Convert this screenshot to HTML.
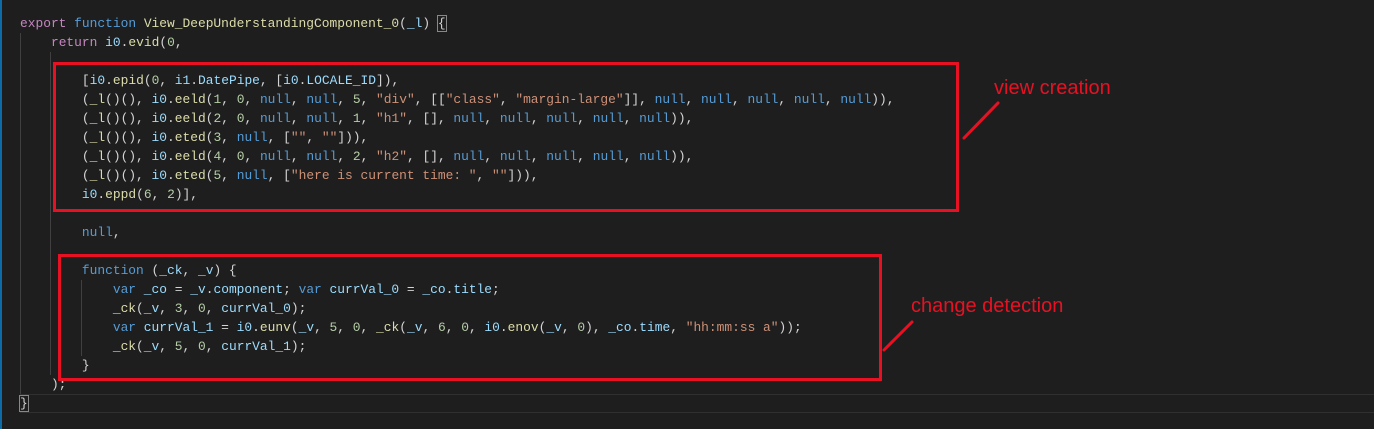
<!DOCTYPE html>
<html><head><meta charset="utf-8"><style>
html,body{margin:0;padding:0;background:#1e1e1e;width:1374px;height:429px;overflow:hidden;position:relative}
.code{position:absolute;left:20px;top:14px;font-family:"Liberation Mono",monospace;font-size:12.9px;line-height:19px;color:#d4d4d4;white-space:pre}
.k{color:#c586c0}.b{color:#569cd6}.f{color:#dcdcaa}.v{color:#9cdcfe}.n{color:#b5cea8}.s{color:#ce9178}
.box{position:absolute;border:3px solid #e81123;box-sizing:border-box}
.lbl{position:absolute;color:#e81123;font-family:"Liberation Sans",sans-serif;font-size:20px;line-height:24px}
.g{position:absolute;width:1px;background:#404040}
</style></head><body>
<div style="position:absolute;left:0;top:0;width:2px;height:429px;background:#0e6ba8"></div>
<div style="position:absolute;left:20px;top:394px;width:1354px;height:17px;border-top:1px solid #303030;border-bottom:1px solid #303030"></div>
<div class="g" style="left:20px;top:33px;height:361px"></div>
<div class="g" style="left:50px;top:52px;height:323px"></div>
<div class="g" style="left:81px;top:280px;height:76px"></div>
<div class="code"><span class="k">export</span> <span class="b">function</span> <span class="f">View_DeepUnderstandingComponent_0</span>(<span class="v">_l</span>) <span style="outline:1px solid #888">{</span>
    <span class="k">return</span> <span class="v">i0</span>.<span class="f">evid</span>(<span class="n">0</span>,

        [<span class="v">i0</span>.<span class="f">epid</span>(<span class="n">0</span>, <span class="v">i1</span>.<span class="v">DatePipe</span>, [<span class="v">i0</span>.<span class="v">LOCALE_ID</span>]),
        (<span class="f">_l</span>()(), <span class="v">i0</span>.<span class="f">eeld</span>(<span class="n">1</span>, <span class="n">0</span>, <span class="b">null</span>, <span class="b">null</span>, <span class="n">5</span>, <span class="s">"div"</span>, [[<span class="s">"class"</span>, <span class="s">"margin-large"</span>]], <span class="b">null</span>, <span class="b">null</span>, <span class="b">null</span>, <span class="b">null</span>, <span class="b">null</span>)),
        (<span class="f">_l</span>()(), <span class="v">i0</span>.<span class="f">eeld</span>(<span class="n">2</span>, <span class="n">0</span>, <span class="b">null</span>, <span class="b">null</span>, <span class="n">1</span>, <span class="s">"h1"</span>, [], <span class="b">null</span>, <span class="b">null</span>, <span class="b">null</span>, <span class="b">null</span>, <span class="b">null</span>)),
        (<span class="f">_l</span>()(), <span class="v">i0</span>.<span class="f">eted</span>(<span class="n">3</span>, <span class="b">null</span>, [<span class="s">""</span>, <span class="s">""</span>])),
        (<span class="f">_l</span>()(), <span class="v">i0</span>.<span class="f">eeld</span>(<span class="n">4</span>, <span class="n">0</span>, <span class="b">null</span>, <span class="b">null</span>, <span class="n">2</span>, <span class="s">"h2"</span>, [], <span class="b">null</span>, <span class="b">null</span>, <span class="b">null</span>, <span class="b">null</span>, <span class="b">null</span>)),
        (<span class="f">_l</span>()(), <span class="v">i0</span>.<span class="f">eted</span>(<span class="n">5</span>, <span class="b">null</span>, [<span class="s">"here is current time: "</span>, <span class="s">""</span>])),
        <span class="v">i0</span>.<span class="f">eppd</span>(<span class="n">6</span>, <span class="n">2</span>)],

        <span class="b">null</span>,

        <span class="b">function</span> (<span class="v">_ck</span>, <span class="v">_v</span>) {
            <span class="b">var</span> <span class="v">_co</span> = <span class="v">_v</span>.<span class="v">component</span>; <span class="b">var</span> <span class="v">currVal_0</span> = <span class="v">_co</span>.<span class="v">title</span>;
            <span class="f">_ck</span>(<span class="v">_v</span>, <span class="n">3</span>, <span class="n">0</span>, <span class="v">currVal_0</span>);
            <span class="b">var</span> <span class="v">currVal_1</span> = <span class="v">i0</span>.<span class="f">eunv</span>(<span class="v">_v</span>, <span class="n">5</span>, <span class="n">0</span>, <span class="f">_ck</span>(<span class="v">_v</span>, <span class="n">6</span>, <span class="n">0</span>, <span class="v">i0</span>.<span class="f">enov</span>(<span class="v">_v</span>, <span class="n">0</span>), <span class="v">_co</span>.<span class="v">time</span>, <span class="s">"hh:mm:ss a"</span>));
            <span class="f">_ck</span>(<span class="v">_v</span>, <span class="n">5</span>, <span class="n">0</span>, <span class="v">currVal_1</span>);
        }
    );
<span style="outline:1px solid #888">}</span></div>
<div class="box" style="left:53px;top:62px;width:906px;height:150px"></div>
<div class="box" style="left:58px;top:254px;width:824px;height:127px"></div>
<div class="lbl" style="left:994px;top:76px">view creation</div>
<div class="lbl" style="left:911px;top:294px">change detection</div>
<svg style="position:absolute;left:0;top:0" width="1374" height="429"><line x1="964" y1="138" x2="998" y2="103" stroke="#e81123" stroke-width="3" stroke-linecap="round"/><line x1="884" y1="350" x2="912" y2="322" stroke="#e81123" stroke-width="3" stroke-linecap="round"/></svg>
</body></html>
